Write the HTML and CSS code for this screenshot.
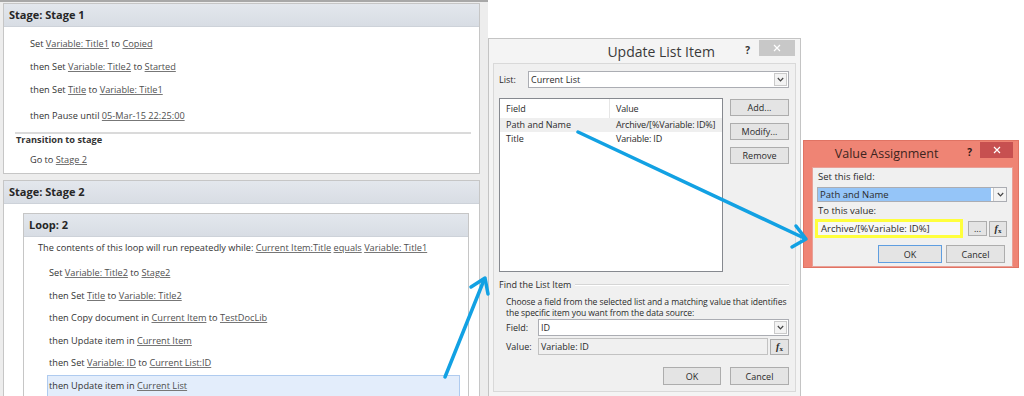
FILE: index.html
```html
<!DOCTYPE html>
<html lang="en">
<head>
    <meta charset="UTF-8">
    <title>Workflow - Update List Item</title>
    <link rel="stylesheet" href="styles.css">
</head>
<body>
    <div class="designer">
        <section class="stage">
            <header class="stage-head">Stage: Stage 1</header>
            <div class="stage-body">
                <p class="stmt">Set <a>Variable: Title1</a> to <a>Copied</a></p>
                <p class="stmt">then Set <a>Variable: Title2</a> to <a>Started</a></p>
                <p class="stmt">then Set <a>Title</a> to <a>Variable: Title1</a></p>
                <p class="stmt pause">then Pause until <a>05-Mar-15 22:25:00</a></p>
                <div class="transition">
                    <p class="transition-title">Transition to stage</p>
                    <p class="stmt">Go to <a>Stage 2</a></p>
                </div>
            </div>
        </section>

        <section class="stage stage-two">
            <header class="stage-head">Stage: Stage 2</header>
            <div class="stage-body">
                <div class="loop">
                    <header class="loop-head">Loop: 2</header>
                    <div class="loop-body">
                        <p class="loop-cond">The contents of this loop will run repeatedly while: <a>Current Item:Title</a> <a>equals</a> <a>Variable: Title1</a></p>
                        <div class="steps">
                            <p class="step">Set <a>Variable: Title2</a> to <a>Stage2</a></p>
                            <p class="step">then Set <a>Title</a> to <a>Variable: Title2</a></p>
                            <p class="step">then Copy document in <a>Current Item</a> to <a>TestDocLib</a></p>
                            <p class="step">then Update item in <a>Current Item</a></p>
                            <p class="step">then Set <a>Variable: ID</a> to <a>Current List:ID</a></p>
                            <p class="step selected">then Update item in <a>Current List</a></p>
                        </div>
                    </div>
                </div>
            </div>
        </section>
    </div>

    <!-- Update List Item -->
    <div class="dialog update-dialog">
        <div class="titlebar">
            <span class="title">Update List Item</span>
            <span class="help">?</span>
            <span class="close"><svg width="8" height="8" viewBox="0 0 8 8"><path d="M1 1L7 7M7 1L1 7" stroke="#fff" stroke-width="1.2"/></svg></span>
        </div>
        <div class="panel">
            <div class="field-row list-row">
                <label class="lbl lbl-list">List:</label>
                <div class="combo">
                    <span class="combo-text">Current List</span>
                    <span class="combo-btn"><svg width="7" height="5" viewBox="0 0 7 5"><path d="M0.8 1L3.5 3.8L6.2 1" fill="none" stroke="#444" stroke-width="1.2"/></svg></span>
                </div>
            </div>

            <div class="list-area">
                <div class="listbox">
                    <div class="lb-head">
                        <span class="col-field">Field</span>
                        <span class="col-value">Value</span>
                    </div>
                    <div class="lb-row active">
                        <span class="col-field">Path and Name</span>
                        <span class="col-value">Archive/[%Variable: ID%]</span>
                    </div>
                    <div class="lb-row">
                        <span class="col-field">Title</span>
                        <span class="col-value">Variable: ID</span>
                    </div>
                </div>
                <div class="side-buttons">
                    <button class="btn">Add...</button>
                    <button class="btn">Modify...</button>
                    <button class="btn">Remove</button>
                </div>
            </div>

            <div class="group">
                <div class="group-title"><span>Find the List Item</span></div>
                <p class="group-desc">Choose a field from the selected list and a matching value that identifies<br>the specific item you want from the data source:</p>
                <div class="field-row">
                    <label class="lbl lbl-find">Field:</label>
                    <div class="combo">
                        <span class="combo-text">ID</span>
                        <span class="combo-btn"><svg width="7" height="5" viewBox="0 0 7 5"><path d="M0.8 1L3.5 3.8L6.2 1" fill="none" stroke="#444" stroke-width="1.2"/></svg></span>
                    </div>
                </div>
                <div class="field-row value-row">
                    <label class="lbl lbl-find">Value:</label>
                    <div class="textbox readonly">Variable: ID</div>
                    <button class="btn btn-fx"><span class="fx"><i>f</i><sub>x</sub></span></button>
                </div>
            </div>

            <div class="footer">
                <button class="btn btn-ok">OK</button>
                <button class="btn btn-cancel">Cancel</button>
            </div>
        </div>
    </div>

    <!-- Value Assignment -->
    <div class="dialog value-dialog">
        <div class="titlebar">
            <span class="title">Value Assignment</span>
            <span class="help">?</span>
            <span class="close"><svg width="8" height="8" viewBox="0 0 8 8"><path d="M1 1L7 7M7 1L1 7" stroke="#fff" stroke-width="1.2"/></svg></span>
        </div>
        <div class="panel">
            <p class="va-label">Set this field:</p>
            <div class="combo va-combo">
                <span class="combo-text picked">Path and Name</span>
                <span class="combo-btn"><svg width="7" height="5" viewBox="0 0 7 5"><path d="M0.8 1L3.5 3.8L6.2 1" fill="none" stroke="#444" stroke-width="1.2"/></svg></span>
            </div>
            <p class="va-label">To this value:</p>
            <div class="va-row">
                <div class="textbox marked">Archive/[%Variable: ID%]</div>
                <button class="btn btn-dots">...</button>
                <button class="btn btn-fx"><span class="fx"><i>f</i><sub>x</sub></span></button>
            </div>
            <div class="footer va-footer">
                <button class="btn btn-ok default">OK</button>
                <button class="btn btn-cancel">Cancel</button>
            </div>
        </div>
    </div>

    <svg class="arrows" width="1024" height="396" viewBox="0 0 1024 396">
        <g fill="none" stroke="#12a1e3" stroke-width="3.5" stroke-linecap="round" stroke-linejoin="round">
            <path d="M445 377L484 280"/>
            <path d="M471 287L485 278L488 294"/>
            <path d="M578 132L804 238"/>
            <path d="M796 226L806 239L792 247"/>
        </g>
    </svg>
</body>
</html>
```

FILE: styles.css
```css
* {
    box-sizing: border-box;
    margin: 0;
    padding: 0;
}
body {
    width: 1024px;
    height: 396px;
    overflow: hidden;
    position: relative;
    display: flex;
    align-items: flex-start;
    background-color: #fff;
    font-family: "Open Sans", "Noto Sans", sans-serif;
    color: #333;
}
a {
    color: #4f4f4f;
    text-decoration: underline;
    text-decoration-color: #777;
}

/* workflow designer */
.designer {
    flex: none;
    width: 488px;
    height: 396px;
    background-color: #ededed;
    border-top: 2px solid #a8a8a8;
    padding: 1px 0 0 3px;
}
.stage {
    width: 477px;
    background-color: #fff;
    border: 1px solid #c6c6c6;
}
.stage-two {
    margin-top: 6px;
}
.stage-head,
.loop-head {
    height: 23px;
    line-height: 22px;
    padding-left: 5px;
    font-size: 11px;
    font-weight: 700;
    color: #262626;
    background: linear-gradient(#e3e7ed, #d8dde4);
    border-bottom: 1px solid #cdd2d9;
}
.stage-body {
    padding: 5px 0 2px 0;
    font-size: 9.2px;
}
.stage-two .stage-body {
    padding: 9px 10px 0 19px;
    height: 200px;
}
.stmt {
    line-height: 23px;
    padding-left: 26px;
}
.pause {
    margin-top: 3px;
}
.transition {
    margin: 5px 8px 0 11px;
    border-top: 2px solid #dadada;
}
.transition-title {
    line-height: 11px;
    padding: 0 0 3px 1px;
    font-weight: 700;
}
.transition .stmt {
    padding-left: 15px;
}
.loop {
    border: 1px solid #c6c6c6;
    height: 200px;
}
.loop-cond {
    line-height: 22px;
    padding-left: 14px;
}
.steps {
    padding-top: 3px;
}
.step {
    line-height: 20.6px;
    margin: 0 8px 0 23px;
    padding-left: 1px;
    border: 1px solid transparent;
}
.step.selected {
    background-color: #e3edfb;
    border-color: #afcbef;
}

/* dialogs */
.dialog {
    flex: none;
    border: 1px solid #c4c4c4;
    font-size: 9px;
    color: #2b2b2b;
}
.titlebar {
    display: flex;
    align-items: flex-start;
    height: 24px;
}
.title {
    flex: 1;
    text-align: center;
    line-height: 26px;
    font-size: 14px;
    color: #3a3a3a;
}
.help {
    font-size: 10px;
    font-weight: 700;
    line-height: 18px;
    margin-top: 2px;
    color: #333;
}
.close {
    display: flex;
    align-items: center;
    justify-content: center;
    height: 16px;
    margin-top: 1px;
    background-color: #c8c8c8;
}
.panel {
    border: 1px solid #d9d9d9;
    background-color: #f0f0f0;
}

/* update list item */
.update-dialog {
    width: 313px;
    height: 364px;
    margin-top: 38px;
    padding: 0 4px;
    background-color: #f4f4f4;
}
.update-dialog .title {
    padding-left: 84px;
}
.update-dialog .help {
    margin-right: 9px;
}
.update-dialog .close {
    width: 36px;
    margin-right: 1px;
}
.update-dialog .panel {
    height: 329px;
    padding: 7px 6px 0 5px;
}
.field-row {
    display: flex;
    align-items: center;
}
.lbl {
    flex: none;
}
.lbl-list {
    width: 29px;
}
.lbl-find {
    width: 32px;
    margin-left: 7px;
}
.combo {
    flex: 1;
    display: flex;
    height: 17px;
    background-color: #fff;
    border: 1px solid #abadb3;
}
.combo-text {
    flex: 1;
    line-height: 15px;
    padding-left: 2px;
}
.combo-btn {
    display: flex;
    align-items: center;
    justify-content: center;
    width: 13px;
    margin: 1px;
    background-color: #f3f3f3;
    border: 1px solid #cacaca;
}
.list-area {
    display: flex;
    margin-top: 10px;
}
.listbox {
    width: 224px;
    height: 174px;
    background-color: #fff;
    border: 1px solid #86898f;
}
.lb-head,
.lb-row {
    display: flex;
}
.lb-head {
    height: 19px;
    line-height: 19px;
}
.lb-head .col-field {
    border-right: 1px solid #e6e6e6;
}
.lb-row {
    height: 14px;
    line-height: 14px;
}
.lb-row.active {
    background-color: #efefef;
}
.col-field {
    width: 110px;
    padding-left: 6px;
}
.col-value {
    padding-left: 6px;
    letter-spacing: -0.15px;
}
.side-buttons {
    display: flex;
    flex-direction: column;
    gap: 7px;
    margin: 1px 0 0 7px;
    flex: 1;
}
.btn {
    font-family: inherit;
    font-size: 9px;
    color: #2b2b2b;
    height: 17px;
    background-color: #e4e4e4;
    border: 1px solid #adadad;
}
.group {
    margin-top: 7px;
}
.group-title {
    display: flex;
    align-items: center;
    line-height: 12px;
}
.group-title::after {
    content: "";
    flex: 1;
    margin-left: 4px;
    border-top: 1px solid #d5d5d5;
    border-bottom: 1px solid #fff;
}
.group-desc {
    margin: 6px 0 1px 7px;
    line-height: 10.5px;
    font-size: 8.6px;
    letter-spacing: -0.1px;
    white-space: nowrap;
}
.value-row {
    margin-top: 2px;
}
.textbox {
    flex: 1;
    height: 17px;
    line-height: 15px;
    padding-left: 2px;
    border: 1px solid #c2c2c2;
}
.textbox.readonly {
    background-color: #f0f0f0;
}
.btn-fx {
    width: 19px;
    height: 16px;
    margin-left: 2px;
    padding: 0;
}
.fx {
    font-family: "Liberation Serif", serif;
    font-size: 10px;
    font-weight: 700;
}
.fx sub {
    font-size: 7px;
    vertical-align: -1px;
}
.footer {
    display: flex;
    justify-content: flex-end;
    gap: 9px;
    margin-top: 12px;
}
.btn-ok {
    width: 58px;
    height: 18px;
}
.btn-cancel {
    width: 59px;
    height: 18px;
}

/* value assignment */
.value-dialog {
    width: 216px;
    height: 128px;
    margin: 140px 0 0 2px;
    padding: 0 5px 0 8px;
    background-color: #ef8474;
    border-color: #e07363;
}
.value-dialog .titlebar {
    height: 26px;
}
.value-dialog .title {
    font-size: 12.5px;
    color: #3d2420;
    line-height: 25px;
    padding-right: 6px;
}
.value-dialog .help {
    margin-right: 8px;
    color: #2d1a17;
}
.value-dialog .close {
    width: 33px;
    background-color: #c75050;
}
.value-dialog .panel {
    height: 100px;
    padding: 3px 5px 0 2px;
    border-color: #e9a097;
    font-size: 9.5px;
}
.va-label {
    line-height: 12px;
    padding-left: 3px;
}
.va-combo {
    margin: 4px 0 3px 2px;
    height: 15px;
}
.va-combo .combo-text {
    line-height: 13px;
}
.va-combo .combo-btn {
    margin: 0 0 0 2px;
    border: none;
    border-left: 1px solid #cacaca;
}
.picked {
    background-color: #95c5f8;
}
.va-row {
    display: flex;
    align-items: center;
    margin-top: 2px;
}
.textbox.marked {
    flex: none;
    width: 148px;
    height: 19px;
    line-height: 13px;
    padding-left: 3px;
    background-color: #f7f7f7;
    border: 3px solid #ffff3c;
}
.btn-dots {
    width: 20px;
    height: 15px;
    margin-left: 5px;
    padding: 0;
    line-height: 10px;
}
.va-footer {
    margin-top: 7px;
    gap: 4px;
    padding-right: 2px;
}
.va-footer .btn-ok {
    width: 64px;
}
.btn.default {
    border-color: #5f9ee0;
}

.arrows {
    position: absolute;
    top: 0;
    left: 0;
    pointer-events: none;
}
```
